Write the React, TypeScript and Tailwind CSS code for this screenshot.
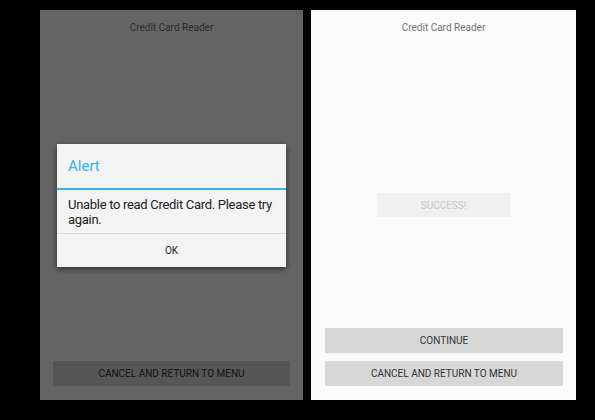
import React from "react";

export default function App() {
  const font = { fontFamily: "Roboto, 'Noto Sans', sans-serif" };
  return (
    <div className="w-[595px] h-[420px] bg-black flex pt-[10px] pl-[40px] gap-[8px]" style={font}>
      {/* Left screen with dialog */}
      <div className="relative w-[263px] h-[390px] bg-[#fafafa] flex flex-col">
        <div className="h-[34px] flex items-center justify-center text-[10px] text-[#737373]">Credit Card Reader</div>
        <div className="flex-1" />
        <div className="px-[13px] pb-[14px]">
          <div className="h-[25px] bg-[#d6d7d6] flex items-center justify-center text-[10px] text-[#333]">CANCEL AND RETURN TO MENU</div>
        </div>
        <div className="absolute inset-0 bg-black/60 flex items-center justify-center">
          <div className="w-[229px] bg-[#f3f3f3] shadow-[0_2px_6px_rgba(0,0,0,0.55)] flex flex-col">
            <div className="h-[44px] flex items-center pl-[11px] pt-[2px] text-[15px] text-[#33b5e5]">Alert</div>
            <div className="h-[2px] bg-[#33b5e5]" />
            <div className="pl-[11px] pr-[6px] pt-[7px] pb-[6px] text-[13px] leading-[15px] tracking-[-0.3px] text-[#222]">
              Unable to read Credit Card. Please try again.
            </div>
            <div className="h-px bg-[#dcdcdc]" />
            <div className="h-[33px] flex items-center justify-center text-[10px] text-[#222]">OK</div>
          </div>
        </div>
      </div>
      {/* Right screen */}
      <div className="w-[265px] h-[390px] bg-[#fafafa] flex flex-col">
        <div className="h-[34px] flex items-center justify-center text-[10px] text-[#737373]">Credit Card Reader</div>
        <div className="mt-[149px] self-center w-[133px] h-[24px] bg-[#eff0ef] flex items-center justify-center text-[10px] text-[#c8c8c8]">SUCCESS!</div>
        <div className="flex-1" />
        <div className="pl-[14px] pr-[13px] pb-[14px] flex flex-col gap-[8px]">
          <div className="h-[25px] bg-[#d6d7d6] flex items-center justify-center text-[10px] text-[#333]">CONTINUE</div>
          <div className="h-[25px] bg-[#d6d7d6] flex items-center justify-center text-[10px] text-[#333]">CANCEL AND RETURN TO MENU</div>
        </div>
      </div>
    </div>
  );
}
